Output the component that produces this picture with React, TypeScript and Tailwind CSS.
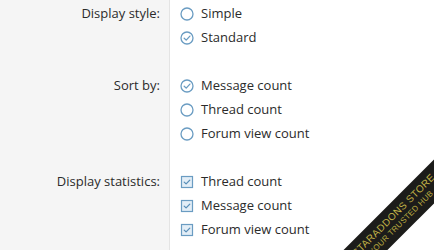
type Kind = 'radio' | 'check'

interface Option {
  label: string
  checked: boolean
}

interface Group {
  label: string
  kind: Kind
  options: Option[]
}

const groups: Group[] = [
  {
    label: 'Display style:',
    kind: 'radio',
    options: [
      { label: 'Simple', checked: false },
      { label: 'Standard', checked: true },
    ],
  },
  {
    label: 'Sort by:',
    kind: 'radio',
    options: [
      { label: 'Message count', checked: true },
      { label: 'Thread count', checked: false },
      { label: 'Forum view count', checked: false },
    ],
  },
  {
    label: 'Display statistics:',
    kind: 'check',
    options: [
      { label: 'Thread count', checked: true },
      { label: 'Message count', checked: true },
      { label: 'Forum view count', checked: true },
    ],
  },
]

function RadioIcon({ checked }: { checked: boolean }) {
  return (
    <svg width="14" height="14" viewBox="0 0 14 14" className="shrink-0">
      <circle cx="7" cy="7" r="6" fill="white" stroke="#6a9cc2" strokeWidth="1.3" />
      {checked && (
        <path d="M4.2 7.2 L6.2 9.1 L9.9 5.1" fill="none" stroke="#6a9cc2" strokeWidth="1.3" strokeLinecap="round" strokeLinejoin="round" />
      )}
    </svg>
  )
}

function CheckIcon() {
  return (
    <svg width="14" height="14" viewBox="0 0 14 14" className="shrink-0">
      <rect x="1.5" y="1.5" width="11" height="11" fill="#e3eef7" stroke="#6a9cc2" strokeWidth="1.2" />
      <path d="M4.2 7.1 L6.1 8.9 L9.8 5.1" fill="none" stroke="#5a8fb8" strokeWidth="1.3" strokeLinecap="round" strokeLinejoin="round" />
    </svg>
  )
}

export default function App() {
  return (
    <div className="relative flex h-[250px] w-[434px] flex-col overflow-hidden bg-white text-[13px] text-[#2b2b2b] [font-family:'Open_Sans',sans-serif]">
      {groups.map((g, gi) => {
        const last = gi === groups.length - 1
        return (
          <div key={g.label} className={`flex ${last ? 'flex-1' : ''}`}>
            <div className={`w-[170px] shrink-0 border-r border-[#e4e4e4] bg-[#f5f5f5] pr-[9px] ${gi === 0 ? 'pt-[2px]' : ''}`}>
              <div className="flex h-[24px] items-center justify-end">{g.label}</div>
            </div>
            <div className={`flex flex-col pl-[10px] ${gi === 0 ? 'pt-[2px]' : ''} ${last ? '' : 'pb-6'}`}>
              {g.options.map((o) => (
                <div key={o.label} className="flex h-[24px] items-center gap-[7px]">
                  {g.kind === 'radio' ? <RadioIcon checked={o.checked} /> : <CheckIcon />}
                  <span>{o.label}</span>
                </div>
              ))}
            </div>
          </div>
        )
      })}
      <div className="absolute left-[267px] top-[203px] flex h-[31px] w-[260px] -rotate-45 flex-col items-center justify-center bg-[#1c1c1a] leading-none [font-family:'Liberation_Sans',sans-serif]">
        <span className="text-[10px] tracking-[0.4px] text-[#c3b447]">STARADDONS STORE</span>
        <span className="mt-[2px] text-[8px] tracking-[0.3px] text-[#b7a940]">YOUR TRUSTED HUB</span>
      </div>
    </div>
  )
}
